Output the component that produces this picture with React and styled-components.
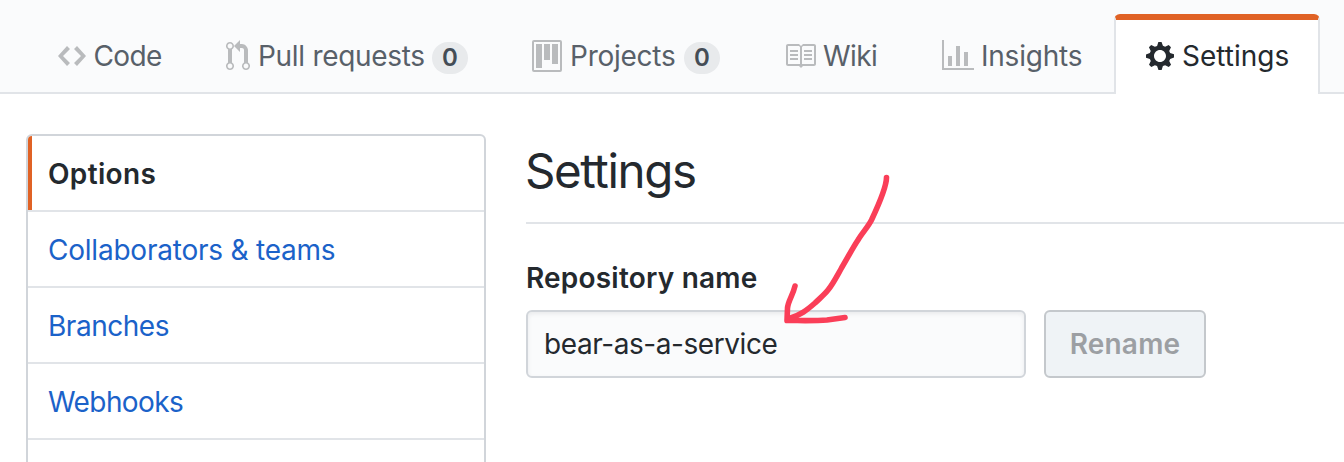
import React from "react";
import styled, { createGlobalStyle } from "styled-components";

const GlobalStyle = createGlobalStyle`
  *, *::before, *::after { box-sizing: border-box; }
  html, body { margin: 0; padding: 0; background: #fff; overflow: hidden; }
  body {
    font-family: Inter, "Liberation Sans", sans-serif;
    font-size: 28px;
    line-height: 42px;
    color: #24292e;
  }
`;

const Page = styled.div`
  position: relative;
  width: 1344px;
  height: 462px;
  overflow: hidden;
`;

const TabBar = styled.nav`
  display: flex;
  height: 94px;
  padding: 14px 0 0 26px;
  background: #fafbfc;
  border-bottom: 2px solid #e1e4e8;
`;

const Tab = styled.a`
  display: flex;
  flex: none;
  width: ${(p) => p.$width}px;
  height: 80px;
  padding: ${(p) => (p.$active ? "20px" : "24px")} 30px 0;
  border: 2px solid transparent;
  border-width: ${(p) => (p.$active ? "6px 2px 0" : "2px 2px 0")};
  border-radius: 6px 6px 0 0;
  white-space: nowrap;
  color: ${(p) => (p.$active ? "#24292e" : "#586069")};
  ${(p) =>
    p.$active &&
    `
    background: #fff;
    border-color: #e06225 #e1e4e8 transparent;
  `}
`;

const TabIcon = styled.svg`
  flex: none;
  display: block;
  height: 32px;
  margin-right: ${(p) => p.$gap ?? 8}px;
  fill: ${(p) => (p.$active ? "#24292e" : "#b9bbbd")};
`;

const TabLabel = styled.span`
  line-height: 33px;
  font-weight: 425;
  letter-spacing: ${(p) => p.$tracking}px;
`;

const Counter = styled.span`
  width: 36px;
  height: 32px;
  margin: 2px 0 0 auto;
  border-radius: 16px;
  background: #e8eaec;
  color: #444d56;
  font-size: 24px;
  font-weight: 600;
  line-height: 31px;
  text-align: center;
`;

const Content = styled.div`
  display: flex;
  gap: 40px;
  padding: 40px 0 0 26px;
`;

const Menu = styled.nav`
  flex: none;
  width: 460px;
  border: 2px solid #d1d5da;
  border-radius: 6px;
  overflow: hidden;
`;

const MenuItem = styled.a`
  display: block;
  height: 76px;
  padding-left: 20px;
  border-bottom: 2px solid #e1e4e8;
  box-shadow: ${(p) => (p.$active ? "inset 4px 0 0 #e06225" : "none")};
  line-height: 76px;
  letter-spacing: ${(p) => p.$tracking}px;
  font-weight: ${(p) => (p.$active ? 600 : 425)};
  color: ${(p) => (p.$active ? "#24292e" : "#1b62c9")};
`;

const Main = styled.main`
  flex: 1;
  min-width: 0;
`;

const Heading = styled.h2`
  height: 90px;
  margin: 0;
  border-bottom: 2px solid #e1e4e8;
  font-size: 47.5px;
  font-weight: 420;
  line-height: 73px;
  letter-spacing: -1.4px;
  text-indent: -1px;
`;

const Field = styled.form`
  display: grid;
  grid-template-columns: 500px 162px;
  column-gap: 18px;
  padding-top: 33px;
`;

const FieldLabel = styled.label`
  grid-column: 1 / -1;
  height: 53px;
  font-weight: 600;
  letter-spacing: 0.2px;
`;

const TextInput = styled.input`
  height: 68px;
  padding: 0 16px;
  border: 2px solid #d1d5da;
  border-radius: 6px;
  outline: none;
  background: #fafbfc;
  box-shadow: inset 0 2px 4px rgba(27, 31, 35, 0.075);
  color: #24292e;
  font: inherit;
  letter-spacing: -0.43px;
`;

const Button = styled.button`
  height: 68px;
  padding: 0;
  border: 2px solid #c4c8cc;
  border-radius: 6px;
  background: #eff3f6;
  color: #9c9fa3;
  font: inherit;
  font-weight: 600;
  letter-spacing: 0.2px;
`;

const Arrow = styled.svg`
  position: absolute;
  left: 770px;
  top: 165px;
  fill: none;
  stroke: #fa3e58;
  stroke-width: 5.6px;
  stroke-linecap: round;
  stroke-linejoin: round;
`;

const tabs = [
  { label: "Code", width: 168, icon: 14, gap: 7.5, tracking: -0.6,
    d: "M9.5 3L8 4.5 11.5 8 8 11.5 9.5 13 14 8 9.5 3zm-5 0L0 8l4.5 5L6 11.5 2.5 8 6 4.5 4.5 3z" },
  { label: "Pull requests", width: 306, icon: 12, count: 0, tracking: -0.3,
    d: "M11 11.28V5c-.03-.78-.34-1.47-.94-2.06C9.46 2.35 8.78 2.03 8 2H7V0L4 3l3 3V4h1c.27.02.48.11.69.31.21.2.3.42.31.69v6.28A1.993 1.993 0 0 0 10 15a1.993 1.993 0 0 0 1-3.72zm-1 2.92c-.66 0-1.2-.55-1.2-1.2 0-.65.55-1.2 1.2-1.2.65 0 1.2.55 1.2 1.2 0 .65-.55 1.2-1.2 1.2zM4 3c0-1.11-.89-2-2-2a1.993 1.993 0 0 0-1 3.72v6.56A1.993 1.993 0 0 0 2 15a1.993 1.993 0 0 0 1-3.72V4.72c.59-.34 1-.98 1-1.72zm-.8 10c0 .66-.55 1.2-1.2 1.2-.65 0-1.2-.55-1.2-1.2 0-.65.55-1.2 1.2-1.2.65 0 1.2.55 1.2 1.2zM2 4.2C1.34 4.2.8 3.65.8 3c0-.65.55-1.2 1.2-1.2.65 0 1.2.55 1.2 1.2 0 .65-.55 1.2-1.2 1.2z" },
  { label: "Projects", width: 252, icon: 15, count: 0, tracking: -0.25,
    d: "M10 12h3V2h-3v10zm-4-2h3V2H6v8zm-4 4h3V2H2v12zm-1 1h13V1H1v14zM14 0H1a1 1 0 0 0-1 1v14a1 1 0 0 0 1 1h13a1 1 0 0 0 1-1V1a1 1 0 0 0-1-1z" },
  { label: "Wiki", width: 158, icon: 16, gap: 7, tracking: -0.6,
    d: "M3 5h4v1H3V5zm0 3h4V7H3v1zm0 2h4V9H3v1zm11-5h-4v1h4V5zm0 2h-4v1h4V7zm0 2h-4v1h4V9zm2-6v9c0 .55-.45 1-1 1H9.5l-1 1-1-1H2c-.55 0-1-.45-1-1V3c0-.55.45-1 1-1h5.5l1 1 1-1H15c.55 0 1 .45 1 1zm-8 .5L7.5 3H2v9h6V3.5zm7-.5H9.5l-.5.5V12h6V3z" },
  { label: "Insights", width: 204, icon: 16, gap: 7, tracking: -0.22,
    d: "M16 14v1H0V0h1v14h15zM5 13H3V8h2v5zm4 0H7V3h2v10zm4 0h-2V6h2v7z" },
  { label: "Settings", width: 206, icon: 14, active: true, tracking: 0,
    d: "M14 8.77v-1.6l-1.94-.64-.45-1.09.88-1.84-1.13-1.13-1.81.91-1.09-.45-.69-1.92h-1.6l-.63 1.94-1.11.45-1.84-.88-1.13 1.13.91 1.81-.45 1.09L0 7.23v1.59l1.94.64.45 1.09-.88 1.84 1.13 1.13 1.81-.91 1.09.45.69 1.92h1.59l.63-1.94 1.11-.45 1.84.88 1.13-1.13-.92-1.81.47-1.09L14 8.75v.02zM7 11c-1.66 0-3-1.34-3-3s1.34-3 3-3 3 1.34 3 3-1.34 3-3 3z" },
];

const menu = [
  { label: "Options", active: true, tracking: 0.35 },
  { label: "Collaborators & teams", tracking: -0.22 },
  { label: "Branches", tracking: -0.47 },
  { label: "Webhooks", tracking: -0.58 },
];

export default function App() {
  return (
    <>
      <GlobalStyle />
      <Page>
        <TabBar>
          {tabs.map((t) => (
            <Tab key={t.label} $width={t.width} $active={t.active}>
              <TabIcon
                width={t.icon * 2}
                viewBox={`0 0 ${t.icon} 16`}
                fillRule="evenodd"
                $active={t.active}
                $gap={t.gap}
              >
                <path d={t.d} />
              </TabIcon>
              <TabLabel $tracking={t.tracking}>{t.label}</TabLabel>
              {t.count !== undefined && <Counter>{t.count}</Counter>}
            </Tab>
          ))}
        </TabBar>
        <Content>
          <Menu>
            {menu.map((m) => (
              <MenuItem key={m.label} $active={m.active} $tracking={m.tracking}>
                {m.label}
              </MenuItem>
            ))}
            <MenuItem />
          </Menu>
          <Main>
            <Heading>Settings</Heading>
            <Field>
              <FieldLabel htmlFor="repository-name">Repository name</FieldLabel>
              <TextInput id="repository-name" defaultValue="bear-as-a-service" />
              <Button type="button" disabled>Rename</Button>
            </Field>
          </Main>
        </Content>
        <Arrow width="130" height="170" viewBox="770 165 130 170">
          <path d="M886.5 177.5C886.5 187 879 204 871.5 220C868 227 862 233 858 240C852 249 847 259 841.5 268C837 276 833 284 828 290C824 295 819 299 815 303C807 310 801 315 788 319" />
          <path d="M795 286C793 295 788 301 787.5 308L787 320.5C801 320.5 815 321 827 320L845 317.5" />
        </Arrow>
      </Page>
    </>
  );
}
